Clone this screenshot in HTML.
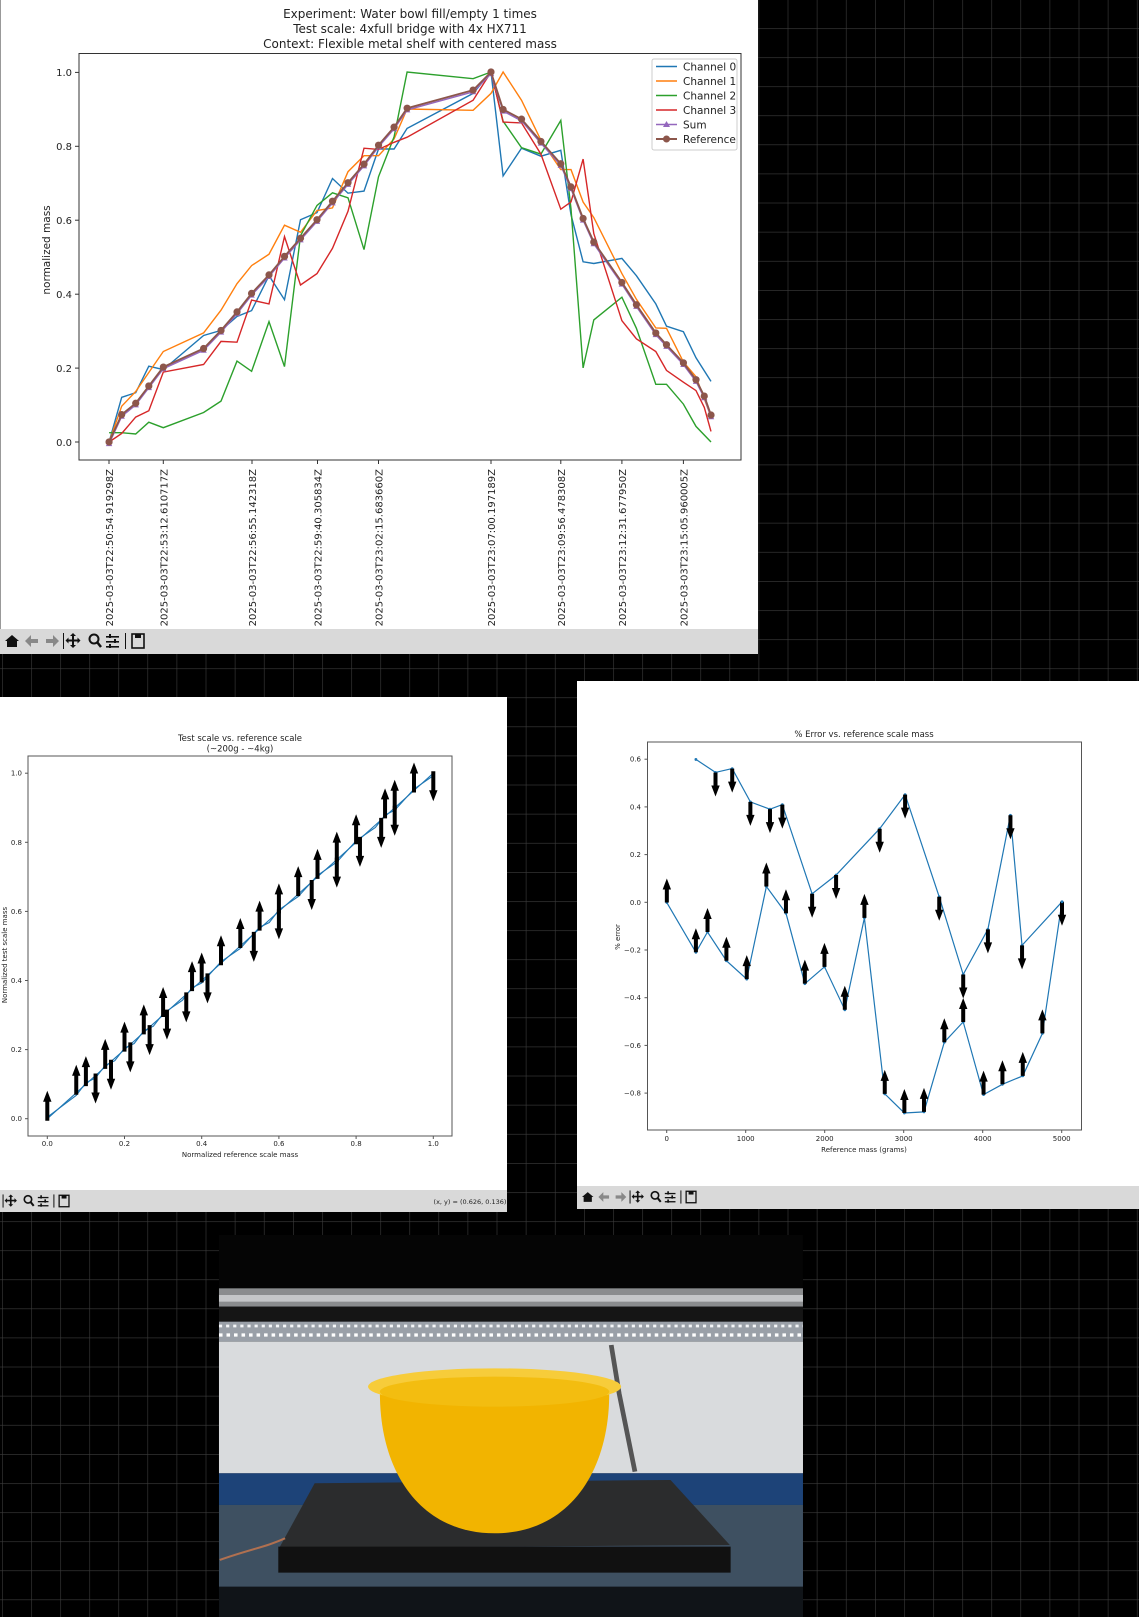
<!DOCTYPE html>
<html><head><meta charset="utf-8"><style>
html,body{margin:0;padding:0;background:#000;}
svg{display:block;}
text{font-family:"DejaVu Sans","Liberation Sans",sans-serif;fill:#222;}
</style></head><body>
<svg id="s" xmlns="http://www.w3.org/2000/svg" width="1139" height="1617" viewBox="0 0 1139 1617">
<defs>
<pattern id="grid" x="2" y="-1" width="29.1" height="29.1" patternUnits="userSpaceOnUse">
<path d="M0 0V29.1M0 0H29.1" stroke="#3c3c3c" stroke-width="1.2" fill="none"/>
</pattern>
</defs>
<rect width="1139" height="1617" fill="#000"/>
<rect width="1139" height="1617" fill="url(#grid)"/>

<!-- TOP WINDOW -->
<rect x="0" y="0" width="758" height="654" fill="#fff"/>
<line x1="0.5" y1="0" x2="0.5" y2="630" stroke="#999"/>
<rect x="0" y="629" width="758" height="25" fill="#d9d9d9"/>
<text x="410" y="18" font-size="12" text-anchor="middle">Experiment: Water bowl fill/empty 1 times</text>
<text x="410" y="33" font-size="12" text-anchor="middle">Test scale: 4xfull bridge with 4x HX711</text>
<text x="410" y="48" font-size="12" text-anchor="middle">Context: Flexible metal shelf with centered mass</text>
<rect x="79" y="53.5" width="662" height="406.5" fill="none" stroke="#333" stroke-width="1"/>
<g font-size="10" text-anchor="end">
<text x="72" y="76">1.0</text><text x="72" y="150">0.8</text><text x="72" y="224">0.6</text><text x="72" y="298">0.4</text><text x="72" y="372">0.2</text><text x="72" y="446">0.0</text>
</g>
<g stroke="#333"><line x1="75" x2="79" y1="72.4" y2="72.4"/><line x1="75" x2="79" y1="146.3" y2="146.3"/><line x1="75" x2="79" y1="220.2" y2="220.2"/><line x1="75" x2="79" y1="294.2" y2="294.2"/><line x1="75" x2="79" y1="368.1" y2="368.1"/><line x1="75" x2="79" y1="442" y2="442"/></g>
<text transform="translate(50,250) rotate(-90)" font-size="10.5" text-anchor="middle">normalized mass</text>
<g id="xt" font-size="10" text-anchor="end"></g>
<g id="topplot"></g>
<rect x="652" y="59" width="85" height="91" fill="#fff" stroke="#ccc" rx="2"/>
<g font-size="10.5">
<line x1="656" x2="677" y1="66.5" y2="66.5" stroke="#1f77b4" stroke-width="1.5"/><text x="683" y="70.5">Channel 0</text>
<line x1="656" x2="677" y1="81" y2="81" stroke="#ff7f0e" stroke-width="1.5"/><text x="683" y="85">Channel 1</text>
<line x1="656" x2="677" y1="95.5" y2="95.5" stroke="#2ca02c" stroke-width="1.5"/><text x="683" y="99.5">Channel 2</text>
<line x1="656" x2="677" y1="110" y2="110" stroke="#d62728" stroke-width="1.5"/><text x="683" y="114">Channel 3</text>
<line x1="656" x2="677" y1="124.5" y2="124.5" stroke="#9467bd" stroke-width="1.5"/><polygon points="666.5,121 663,127 670,127" fill="#9467bd"/><text x="683" y="128.5">Sum</text>
<line x1="656" x2="677" y1="139" y2="139" stroke="#8c564b" stroke-width="2"/><circle cx="666.5" cy="139" r="3.5" fill="#8c564b"/><text x="683" y="143">Reference</text>
</g>
<g id="tb1" fill="#111"></g>

<!-- LEFT WINDOW -->
<rect x="0" y="697" width="507" height="515" fill="#fff"/>
<rect x="0" y="1190" width="507" height="22" fill="#d9d9d9"/>
<text x="240" y="741" font-size="8.5" text-anchor="middle">Test scale vs. reference scale</text>
<text x="240" y="751.5" font-size="8.5" text-anchor="middle">(~200g - ~4kg)</text>
<rect x="28" y="756" width="424" height="380" fill="none" stroke="#555"/>
<g id="lt" font-size="7" text-anchor="middle"></g>
<text x="240" y="1157" font-size="7" text-anchor="middle">Normalized reference scale mass</text>
<text transform="translate(7,955) rotate(-90)" font-size="7" text-anchor="middle">Normalized test scale mass</text>
<g id="leftplot"></g>
<text x="470" y="1204" font-size="6.5" text-anchor="middle">(x, y) = (0.626, 0.136)</text>
<g id="tb2" fill="#111"></g>

<!-- RIGHT WINDOW -->
<rect x="577" y="681" width="562" height="528" fill="#fff"/>
<rect x="577" y="1186" width="562" height="23" fill="#d9d9d9"/>
<text x="864" y="737" font-size="8.5" text-anchor="middle">% Error vs. reference scale mass</text>
<rect x="647.5" y="742" width="434" height="388" fill="none" stroke="#555"/>
<g id="rt" font-size="7" text-anchor="middle"></g>
<text x="864" y="1152" font-size="7" text-anchor="middle">Reference mass (grams)</text>
<text transform="translate(620,937) rotate(-90)" font-size="7" text-anchor="middle">% error</text>
<g id="rightplot"></g>
<g id="tb3" fill="#111"></g>

<!-- PHOTO -->
<g transform="translate(200,1220) scale(0.3954,0.3333)">
<rect x="48" y="45" width="1477" height="1160" fill="#050505"/>
<rect x="48" y="205" width="1477" height="55" fill="#8a8c8e"/>
<rect x="48" y="225" width="1477" height="20" fill="#c4c6c8"/>
<rect x="48" y="260" width="1477" height="45" fill="#151515"/>
<rect x="48" y="305" width="1477" height="60" fill="#9aa0a8"/>
<line x1="48" x2="1525" y1="318" y2="318" stroke="#f4f6f8" stroke-width="8" stroke-dasharray="8 10"/>
<line x1="48" x2="1525" y1="345" y2="345" stroke="#fff" stroke-width="10" stroke-dasharray="9 10"/>
<rect x="48" y="365" width="1477" height="395" fill="#d9dbdd"/>
<path d="M1040 375 L1060 520 L1100 755" stroke="#555" stroke-width="12" fill="none"/>
<rect x="48" y="760" width="1477" height="95" fill="#1d4378"/>
<rect x="48" y="855" width="1477" height="260" fill="#3e5061"/>
<rect x="48" y="1100" width="1477" height="105" fill="#101418"/>
<polygon points="290,790 1190,780 1340,975 200,985" fill="#2b2c2d"/>
<rect x="198" y="980" width="1144" height="78" fill="#111"/>
<path d="M50 1020 C120 990 170 980 215 955" stroke="#b07050" stroke-width="6" fill="none"/>
<path d="M455 520 C455 760 560 940 745 940 C930 940 1035 760 1035 520 Z" fill="#f2b400"/>
<ellipse cx="745" cy="500" rx="320" ry="55" fill="#f7cc3a"/>
<ellipse cx="745" cy="515" rx="290" ry="45" fill="#f3bd10"/>
</g>
</svg>
<script>
(function(){
var NS="http://www.w3.org/2000/svg";
function el(p,t,a){var e=document.createElementNS(NS,t);for(var k in a)e.setAttribute(k,a[k]);p.appendChild(e);return e;}
function G(i){return document.getElementById(i);}
var sx=760/1568, sy=660/1568;
function P(a){var s=[];for(var i=0;i<a.length;i+=2)s.push((a[i]*sx).toFixed(1)+","+(a[i+1]*sy).toFixed(1));return s.join(" ");}
var ref=[225,1050,251,985,280,958,307,917,337,872,420,828,456,785,489,741,519,697,555,653,587,609,620,566,654,522,686,478,718,434,751,390,781,345,813,302,840,257,976,214,1013,171,1038,260,1076,283,1116,336,1157,389,1178,444,1203,519,1225,575,1283,671,1313,724,1353,791,1375,819,1410,862,1436,902,1453,941,1467,986];
var c0=[225,1050,251,944,280,933,307,870,337,878,420,797,456,785,489,752,519,738,555,655,587,712,620,522,654,505,686,424,718,459,751,454,781,354,813,354,840,305,976,222,1013,171,1038,418,1076,352,1116,371,1157,357,1178,510,1203,622,1225,626,1283,614,1313,655,1353,722,1375,775,1410,788,1436,850,1467,906];
var c1=[225,1050,251,965,280,930,307,885,337,835,420,791,456,737,489,674,519,631,555,604,587,535,620,552,654,500,686,494,718,408,751,370,781,370,813,330,840,259,976,262,1013,222,1038,171,1076,238,1116,333,1157,403,1178,403,1203,480,1225,517,1283,650,1313,711,1353,779,1375,780,1410,860,1436,895,1467,990];
var c2=[225,1028,251,1028,280,1031,307,1003,337,1016,420,980,456,953,489,858,519,882,555,764,587,871,620,560,654,488,686,458,718,470,751,593,781,420,813,325,840,171,976,187,1013,171,1038,288,1076,351,1116,366,1157,286,1178,496,1203,874,1225,760,1283,706,1313,780,1353,913,1375,913,1410,960,1436,1013,1467,1050];
var c3=[225,1050,251,1030,280,991,307,976,337,884,420,866,456,811,489,813,519,713,555,722,587,562,620,677,654,650,686,590,718,502,751,352,781,355,813,338,840,326,976,238,1013,171,1038,290,1076,292,1116,366,1157,497,1178,480,1203,378,1225,555,1283,762,1313,805,1353,835,1375,880,1410,908,1436,928,1453,968,1467,1025];
var topG=G("topplot");
[[c0,"#1f77b4"],[c1,"#ff7f0e"],[c2,"#2ca02c"],[c3,"#d62728"]].forEach(function(c){el(topG,"polyline",{points:P(c[0]),fill:"none",stroke:c[1],"stroke-width":1.4});});
var sum=ref.map(function(v,i){return i%2?v+4:v;});
el(topG,"polyline",{points:P(sum),fill:"none",stroke:"#9467bd","stroke-width":1.5});
for(var i=0;i<sum.length;i+=2){var x=sum[i]*sx,y=sum[i+1]*sy;el(topG,"polygon",{points:x+","+(y-3.5)+" "+(x-3.2)+","+(y+2.5)+" "+(x+3.2)+","+(y+2.5),fill:"#9467bd"});}
el(topG,"polyline",{points:P(ref),fill:"none",stroke:"#8c564b","stroke-width":1.8});
for(var i=0;i<ref.length;i+=2){el(topG,"circle",{cx:ref[i]*sx,cy:ref[i+1]*sy,r:3.6,fill:"#8c564b"});}
var ticks=[[109,"2025-03-03T22:50:54.919298Z"],[163.3,"2025-03-03T22:53:12.610717Z"],[252,"2025-03-03T22:56:55.142318Z"],[317.5,"2025-03-03T22:59:40.305834Z"],[378.5,"2025-03-03T23:02:15.683660Z"],[491,"2025-03-03T23:07:00.197189Z"],[560.8,"2025-03-03T23:09:56.478308Z"],[621.9,"2025-03-03T23:12:31.677950Z"],[683.4,"2025-03-03T23:15:05.960005Z"]];
ticks.forEach(function(t){el(G("xt"),"line",{x1:t[0],x2:t[0],y1:460,y2:464,stroke:"#333"});var e=el(G("xt"),"text",{transform:"translate("+(t[0]+4)+",469) rotate(-90)"});e.textContent=t[1];});
function tb(g,x0,y,q){
 function R(x,yy,w,h){el(g,"rect",{x:x,y:yy,width:w,height:h});}
 el(g,"polygon",{points:(x0)+","+(y)+" "+(x0+7*q)+","+(y-6*q)+" "+(x0+14*q)+","+y+" "+(x0+12*q)+","+y+" "+(x0+12*q)+","+(y+6*q)+" "+(x0+2*q)+","+(y+6*q)+" "+(x0+2*q)+","+y});
 el(g,"path",{d:"M"+(x0+20*q)+" "+y+"l"+(6*q)+" "+(-6*q)+"v"+(4*q)+"h"+(7*q)+"v"+(4*q)+"h"+(-7*q)+"v"+(4*q)+"z",fill:"#888"});
 el(g,"path",{d:"M"+(x0+54*q)+" "+y+"l"+(-6*q)+" "+(-6*q)+"v"+(4*q)+"h"+(-7*q)+"v"+(4*q)+"h"+(7*q)+"v"+(4*q)+"z",fill:"#888"});
 R(x0+58*q,y-8*q,1,16*q);
 el(g,"path",{d:"M"+(x0+68*q)+" "+(y-8*q)+"l"+(3*q)+" "+(3*q)+"h"+(-2*q)+"v"+(3.5*q)+"h"+(3.5*q)+"v"+(-2*q)+"l"+(3*q)+" "+(3*q)+"l"+(-3*q)+" "+(3*q)+"v"+(-2*q)+"h"+(-3.5*q)+"v"+(3.5*q)+"h"+(2*q)+"l"+(-3*q)+" "+(3*q)+"l"+(-3*q)+" "+(-3*q)+"h"+(2*q)+"v"+(-3.5*q)+"h"+(-3.5*q)+"v"+(2*q)+"l"+(-3*q)+" "+(-3*q)+"l"+(3*q)+" "+(-3*q)+"v"+(2*q)+"h"+(3.5*q)+"v"+(-3.5*q)+"h"+(-2*q)+"z"});
 el(g,"circle",{cx:x0+89*q,cy:y-2*q,r:4.5*q,fill:"none",stroke:"#111","stroke-width":2*q});
 el(g,"line",{x1:x0+92*q,y1:y+1*q,x2:x0+96*q,y2:y+6*q,stroke:"#111","stroke-width":2.5*q});
 for(var k=0;k<3;k++){R(x0+101*q,y-5*q+k*5*q,13*q,1.6*q);}
 R(x0+104*q,y-7*q,2*q,4*q);R(x0+109*q,y-2*q,2*q,4*q);R(x0+104*q,y+3*q,2*q,4*q);
 R(x0+120*q,y-8*q,1,16*q);
 el(g,"rect",{x:x0+127*q,y:y-7*q,width:12*q,height:14*q,fill:"none",stroke:"#111","stroke-width":1.6*q});
 R(x0+130*q,y-7*q,6*q,4*q);
}
tb(G("tb1"),5,641,1);
tb(G("tb3"),582,1197,0.82);
tb(G("tb2"),-45,1201,0.82);
function arrow(g,x,y,L,up){var d=up?-1:1,h=11,w=4.2,t=2;var yt=y+d*L,yb=y+d*(L-h);
 el(g,"polygon",{points:(x-t)+","+y+" "+(x-t)+","+yb+" "+(x-w)+","+yb+" "+x+","+yt+" "+(x+w)+","+yb+" "+(x+t)+","+yb+" "+(x+t)+","+y,fill:"#000"});}
var lg=G("leftplot"),lt=G("lt");
function LX(v){return 47.3+v*386;} function LY(v){return 1118.7-v*345.5;}
[0,0.2,0.4,0.6,0.8,1.0].forEach(function(v){el(lt,"line",{x1:LX(v),x2:LX(v),y1:1136,y2:1139,stroke:"#555"});var e=el(lt,"text",{x:LX(v),y:1146});e.textContent=v.toFixed(1);
 el(lt,"line",{x1:25,x2:28,y1:LY(v),y2:LY(v),stroke:"#555"});var f=el(lt,"text",{x:22,y:LY(v)+2.5,"text-anchor":"end"});f.textContent=v.toFixed(1);});
var vs=[0,0.075,0.1,0.125,0.15,0.175,0.2,0.225,0.25,0.275,0.3,0.35,0.375,0.4,0.45,0.5,0.55,0.575,0.6,0.65,0.7,0.75,0.8,0.85,0.875,0.9,0.95,1.0];
var p1=vs.map(function(v){return LX(v).toFixed(1)+","+LY(v).toFixed(1);}).join(" ");
var p2=vs.map(function(v,i){return LX(v).toFixed(1)+","+(LY(v)+(i%2?2.5:-1.5)).toFixed(1);}).join(" ");
el(lg,"polyline",{points:p1,fill:"none",stroke:"#1f77b4","stroke-width":1.1});
el(lg,"polyline",{points:p2,fill:"none",stroke:"#1f77b4","stroke-width":1.1});
var ups=[0,0.075,0.1,0.15,0.2,0.25,0.3,0.375,0.4,0.45,0.5,0.55,0.6,0.65,0.7,0.75,0.8,0.875,0.9,0.95];
var dns=[0.125,0.165,0.215,0.265,0.31,0.36,0.415,0.535,0.6,0.685,0.75,0.81,0.865,0.9,1.0];
ups.forEach(function(v){arrow(lg,LX(v),LY(v)+2,30,true);});
dns.forEach(function(v){arrow(lg,LX(v),LY(v)-2,30,false);});
var rg=G("rightplot"),rt=G("rt");
function RX(g){return 666.7+g*0.079;} function RY(v){return 902.3-v*238.5;}
[0,1000,2000,3000,4000,5000].forEach(function(v){el(rt,"line",{x1:RX(v),x2:RX(v),y1:1130,y2:1133,stroke:"#555"});var e=el(rt,"text",{x:RX(v),y:1141});e.textContent=v;});
[0.6,0.4,0.2,0,-0.2,-0.4,-0.6,-0.8].forEach(function(v){el(rt,"line",{x1:644.5,x2:647.5,y1:RY(v),y2:RY(v),stroke:"#555"});var e=el(rt,"text",{x:641,y:RY(v)+2.5,"text-anchor":"end"});e.textContent=(v<0?"\u2212":"")+Math.abs(v).toFixed(1);});
var zx=1139/1568, zy=600/1568;
function Z(a){var s=[];for(var i=0;i<a.length;i+=2)s.push([a[i]*zx,650+a[i+1]*zy]);return s;}
var upP=Z([958,286,985,320,1008,310,1033,397,1060,416,1077,404,1118,637,1151,588,1211,467,1246,378,1293,645,1326,848,1360,730,1391,432,1407,772,1462,658]);
var loP=Z([918,660,958,790,974,737,1000,812,1028,860,1055,618,1082,688,1108,872,1135,828,1163,940,1190,700,1218,1160,1245,1210,1272,1207,1300,1025,1326,972,1354,1162,1380,1135,1408,1113,1435,1002,1462,658]);
function pl(a){return a.map(function(p){return p[0].toFixed(1)+","+p[1].toFixed(1);}).join(" ");}
el(rg,"polyline",{points:pl(upP),fill:"none",stroke:"#1f77b4","stroke-width":1.2});
el(rg,"polyline",{points:pl(loP),fill:"none",stroke:"#1f77b4","stroke-width":1.2});
upP.forEach(function(p,i){el(rg,"circle",{cx:p[0],cy:p[1],r:1.4,fill:"#1f77b4"});if(i>0)arrow(rg,p[0],p[1],24,false);});
loP.forEach(function(p,i){el(rg,"circle",{cx:p[0],cy:p[1],r:1.4,fill:"#1f77b4"});if(i<loP.length-1)arrow(rg,p[0],p[1],24,true);});
})();
</script>
</body></html>
